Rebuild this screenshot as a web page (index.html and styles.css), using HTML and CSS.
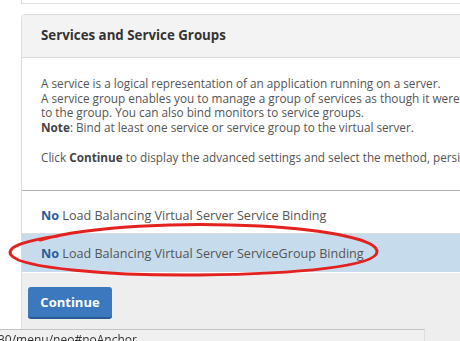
FILE: index.html
```html
<!doctype html>
<html lang="en">
  <head>
    <meta charset="UTF-8" />
    <title>Load Balancing Virtual Server</title>
    <link rel="stylesheet" href="styles.css">
  </head>
  <body>
    <div class="page">
      <div class="prev-card"></div>

      <div class="card">
        <div class="card-header">
          <h2>Services and Service Groups</h2>
        </div>

        <div class="intro">
          <p>
            A service is a logical representation of an application running on a server.<br>
            A service group enables you to manage a group of services as though it were a single service. Services are added<br>
            to the group. You can also bind monitors to service groups.<br>
            <b>Note</b>: Bind at least one service or service group to the virtual server.
          </p>
          <p>Click <b>Continue</b> to display the advanced settings and select the method, persistence and other settings.</p>
        </div>

        <a href="#noAnchor" class="binding-row"><b>No</b> Load Balancing Virtual Server Service Binding</a>
        <a href="#noAnchor" class="binding-row selected"><b>No</b> Load Balancing Virtual Server ServiceGroup Binding</a>

        <div class="card-footer">
          <button class="continue-button">Continue</button>
        </div>
      </div>
    </div>

    <!-- annotation drawn over the screenshot -->
    <svg class="marker" width="460" height="341" viewBox="0 0 460 341">
      <path d="M40 240 C90 226 180 222 260 226 C330 230 378 240 377 252 C376 266 300 274 200 275 C110 276 20 268 11 255 C5 246 30 240 58 236"
        fill="none" stroke="#e3211e" stroke-width="3" stroke-linecap="round" />
    </svg>

    <div class="status-bar">30/menu/neo#noAnchor</div>
  </body>
</html>
```

FILE: styles.css
```css
* {
  margin: 0;
  padding: 0;
  box-sizing: border-box;
}

body {
  font-family: "Open Sans", "Noto Sans", sans-serif;
  background: white;
  overflow: hidden;
  height: 341px;
}

.page {
  padding-left: 21px;
  width: 500px;
}

.prev-card {
  height: 4px;
  border-left: 1px solid #dddddd;
  border-bottom: 1px solid #dddddd;
  margin-bottom: 10px;
}

.card {
  border: 1px solid #dddddd;
  border-radius: 4px 4px 0 0;
}

.card-header {
  height: 43px;
  background: #f3f3f3;
  border-bottom: 1px solid #dddddd;
  border-radius: 4px 4px 0 0;
  padding-left: 19px;
}

.card-header h2 {
  font-size: 13.3px;
  font-weight: 700;
  line-height: 41px;
  color: #333333;
}

.intro {
  padding: 18px 19px 26px;
  font-size: 11.75px;
  line-height: 14.7px;
  color: #555555;
  white-space: nowrap;
}

.intro p + p {
  margin-top: 14.7px;
}

.intro b {
  color: #444444;
}

.binding-row {
  display: block;
  padding: 3px 0 0 19px;
  font-size: 12.6px;
  color: #555555;
  text-decoration: none;
  white-space: nowrap;
  height: 43px;
  line-height: 43px;
  border-top: 1px solid #b0b0b0;
}

.binding-row b {
  color: #2a5c9c;
}

.binding-row.selected {
  height: 40px;
  padding-top: 0;
  line-height: 39px;
  background: #c6dcec;
  border-top: 1px solid #dcdcdc;
  border-bottom: 1px solid white;
}

.card-footer {
  background: #eeeeee;
  padding: 14px 6px 30px;
}

.continue-button {
  width: 84px;
  height: 32px;
  background: #3b78bd;
  color: white;
  border: none;
  border-bottom: 2px solid #2b5a93;
  border-radius: 3px;
  font-family: inherit;
  font-size: 13px;
  font-weight: 700;
}

.marker {
  position: absolute;
  top: 0;
  left: 0;
  pointer-events: none;
}

.status-bar {
  position: fixed;
  left: 0;
  top: 329px;
  width: 425px;
  height: 20px;
  background: #f0f0f0;
  border-top: 1px solid #c4c4c4;
  border-right: 1px solid #dddddd;
  font-size: 12px;
  line-height: 19px;
  color: #333333;
  text-indent: -2px;
}
```
